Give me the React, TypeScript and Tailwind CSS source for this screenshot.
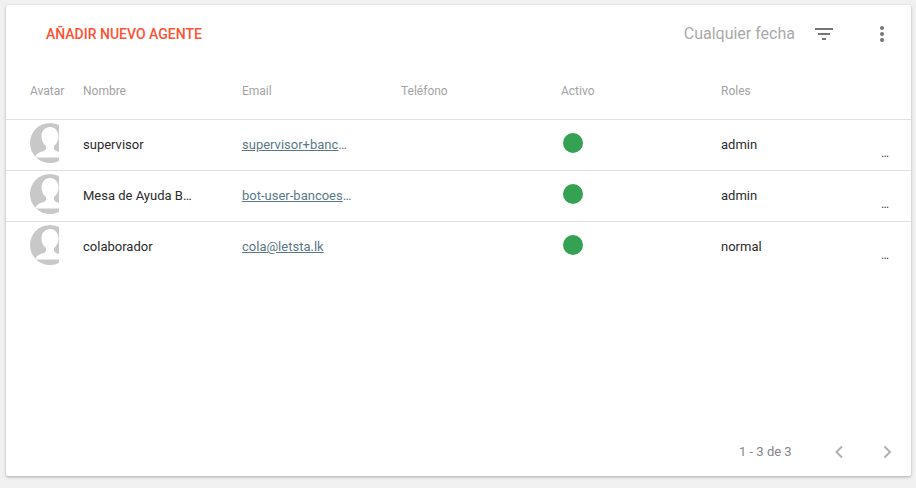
const agents = [
  { name: 'supervisor', email: 'supervisor+bancoestado@letsta.lk', role: 'admin' },
  { name: 'Mesa de Ayuda Banco', email: 'bot-user-bancoestado@letsta.lk', role: 'admin' },
  { name: 'colaborador', email: 'cola@letsta.lk', role: 'normal' },
];

const Avatar = () => (
  <div className="w-[29px] h-10 overflow-hidden">
    <svg width="40" height="40" viewBox="0 0 40 40">
      <circle cx="20" cy="20" r="20" fill="#c8c8c8" />
      <path
        d="M20 4c-5 0-8.500 4-8.500 9.500 0 4 1.800 7.500 4.500 9.500v2.500c0 1.500-2 2.500-4.500 3.300-3 1-5.500 2.200-6.500 5.700h30c-1-3.500-3.500-4.700-6.500-5.700-2.500-.8-4.500-1.800-4.500-3.300V23c2.700-2 4.500-5.500 4.500-9.500C28.500 8 25 4 20 4z"
        fill="#fff"
      />
    </svg>
  </div>
);

const App = () => {
  return (
    <div className="h-screen bg-[#f1f1f1] pt-[5px] pl-[6px] pr-[5px] pb-[12px] font-['Roboto',sans-serif]">
      <div className="h-full bg-white rounded-[2px] shadow-[0_1px_3px_rgba(0,0,0,0.3)] flex flex-col">
        <div className="h-[58px] flex items-center pl-10 pr-[27px] shrink-0">
          <span className="text-sm font-medium text-[#ff5233]">AÑADIR NUEVO AGENTE</span>
          <span className="ml-auto text-base text-[#aaaaaa]">Cualquier fecha</span>
          <svg className="ml-5" width="18" height="12" viewBox="0 0 18 12">
            <path d="M0 0h18v2H0zM3 5h12v2H3zM7 10h4v2H7z" fill="#757575" />
          </svg>
          <svg className="ml-[47px]" width="4" height="16" viewBox="0 0 4 16">
            <circle cx="2" cy="2" r="2" fill="#757575" />
            <circle cx="2" cy="8" r="2" fill="#757575" />
            <circle cx="2" cy="14" r="2" fill="#757575" />
          </svg>
        </div>

        <div className="h-[57px] flex items-center pl-6 pb-px text-xs text-[#a3a3a3] border-b border-[#e0e0e0] shrink-0">
          <div className="w-[53px]">Avatar</div>
          <div className="w-[159px]">Nombre</div>
          <div className="w-[159px]">Email</div>
          <div className="w-[160px]">Teléfono</div>
          <div className="w-[160px]">Activo</div>
          <div>Roles</div>
        </div>

        {agents.map((agent, i) => (
          <div
            key={agent.name}
            className={`h-[51px] flex pl-6 text-[13px] text-[#2b2b2b] shrink-0 border-b ${i < 2 ? 'border-[#e0e0e0]' : 'border-transparent'}`}
          >
            <div className="w-[53px] pt-[3px]">
              <Avatar />
            </div>
            <div className="w-[159px] flex items-center pr-[49px]">
              <span className="truncate">{agent.name}</span>
            </div>
            <div className="w-[159px] flex items-center pr-[49px]">
              <a href="#" className="truncate underline text-[#5a7a88]">
                {agent.email}
              </a>
            </div>
            <div className="w-[160px]" />
            <div className="w-[160px] pl-[2px] pt-[13px]">
              <div className="w-5 h-5 rounded-full bg-[#34a153]" />
            </div>
            <div className="w-[160px] flex items-center">{agent.role}</div>
            <div className="pt-[25px] text-[#424242] text-xs">…</div>
          </div>
        ))}

        <div className="mt-auto h-[49px] flex items-center pl-[733px] text-[13px] text-[#858585] shrink-0">
          <span className="w-[88px]">1 - 3 de 3</span>
          <svg width="24" height="24" viewBox="0 0 24 24" fill="none" stroke="#b0b0b0" strokeWidth="2">
            <path d="M15 6.500 9.500 12l5.500 5.500" />
          </svg>
          <svg className="ml-6" width="24" height="24" viewBox="0 0 24 24" fill="none" stroke="#b0b0b0" strokeWidth="2">
            <path d="M9.500 6.500 15 12l-5.500 5.500" />
          </svg>
        </div>
      </div>
    </div>
  );
};

export default App;
